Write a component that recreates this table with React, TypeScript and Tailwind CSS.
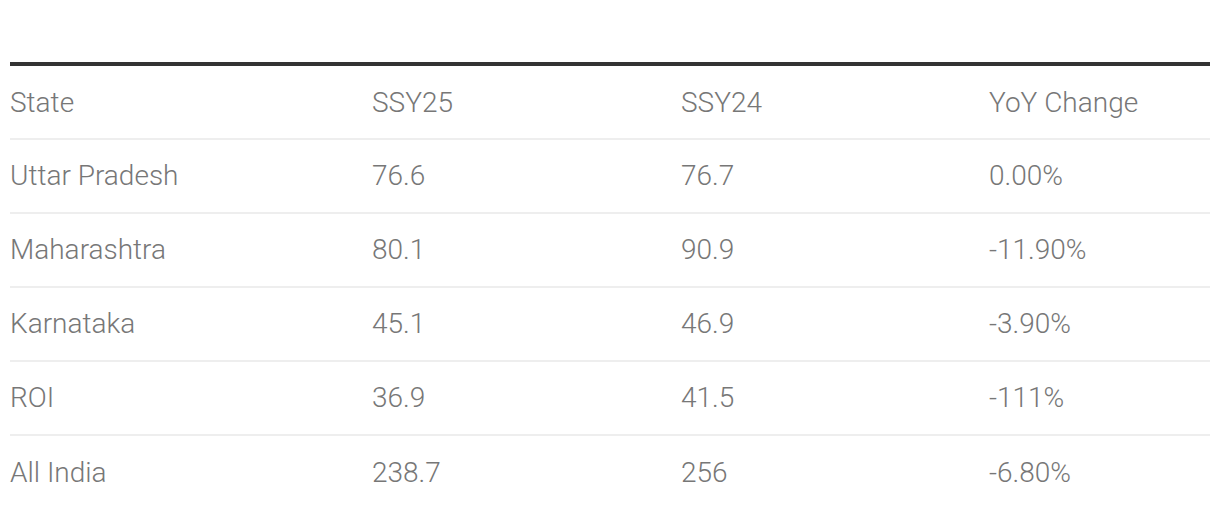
import React from "react"

const rows = [
  ["Uttar Pradesh", "76.6", "76.7", "0.00%"],
  ["Maharashtra", "80.1", "90.9", "-11.90%"],
  ["Karnataka", "45.1", "46.9", "-3.90%"],
  ["ROI", "36.9", "41.5", "-111%"],
  ["All India", "238.7", "256", "-6.80%"]
]

const cell = "h-[74px] p-0 text-left align-middle font-light"
const head = "h-[75px] p-0 pt-[2px] text-left align-middle font-light"

export default function App() {
  return (
    <div className="bg-white w-[1220px] h-[518px] pt-[62px] px-[10px] font-['Roboto',sans-serif] text-[28px] text-[#777]">
      <table className="w-[1200px] border-collapse border-t-4 border-[#333] table-fixed">
        <thead>
          <tr className="border-b-2 border-[#eee]">
            <th className={`${head} w-[362px]`}>State</th>
            <th className={`${head} w-[309px]`}>SSY25</th>
            <th className={`${head} w-[308px]`}>SSY24</th>
            <th className={`${head} w-[221px]`}>YoY Change</th>
          </tr>
        </thead>
        <tbody>
          {rows.map((r, i) => (
            <tr
              key={r[0]}
              className={i < rows.length - 1 ? "border-b-2 border-[#eee]" : ""}>
              {r.map((v, j) => (
                <td key={j} className={cell}>
                  {v}
                </td>
              ))}
            </tr>
          ))}
        </tbody>
      </table>
    </div>
  )
}
